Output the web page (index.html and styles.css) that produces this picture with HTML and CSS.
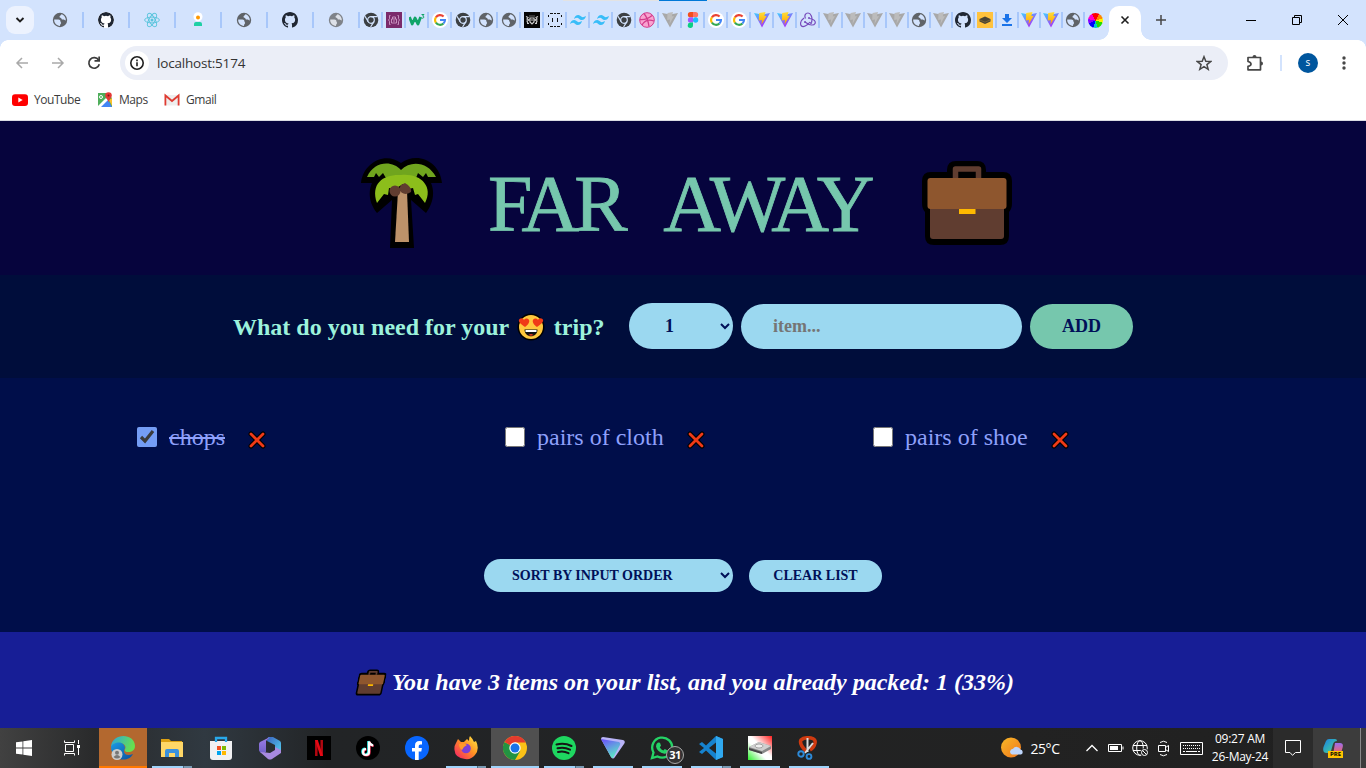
FILE: index.html
```html
<!DOCTYPE html>
<html lang="en">
<head>
<meta charset="utf-8">
<title>Far Away</title>
<link rel="stylesheet" href="styles.css">
</head>
<body>
<svg class="defs" width="0" height="0">
  <defs>
    <linearGradient id="viteA" x1="0" y1="0" x2=".6" y2="1"><stop stop-color="#41d1ff"/><stop offset="1" stop-color="#b02cf5"/></linearGradient>
    <linearGradient id="viteB" x1="0" y1="0" x2="0" y2="1"><stop stop-color="#ffdf3a"/><stop offset="1" stop-color="#ffa000"/></linearGradient>
    <linearGradient id="edge" x1="0" y1="0" x2="1" y2=".3"><stop stop-color="#2aa4e0"/><stop offset="1" stop-color="#66e04f"/></linearGradient>
    <linearGradient id="edge2" x1="0" y1="0" x2="1" y2="1"><stop stop-color="#1a9be6"/><stop offset="1" stop-color="#0b4f9c"/></linearGradient>
    <linearGradient id="fox" x1="1" y1="0" x2="0" y2="1"><stop stop-color="#fff04a"/><stop offset=".45" stop-color="#ff9322"/><stop offset="1" stop-color="#f5156c"/></linearGradient>
    <linearGradient id="m365" x1="0" y1="0" x2="0" y2="1"><stop stop-color="#9d7fe8"/><stop offset="1" stop-color="#7060c8"/></linearGradient>
    <linearGradient id="m365b" x1="0" y1="0" x2="1" y2="1"><stop stop-color="#3a62c0"/><stop offset="1" stop-color="#54d0f0"/></linearGradient>
    <linearGradient id="vpn" x1="0" y1="0" x2=".5" y2="1"><stop stop-color="#6d4aff"/><stop offset="1" stop-color="#5be6c6"/></linearGradient>
    <linearGradient id="sun" x1="0" y1="0" x2="1" y2="1"><stop stop-color="#f9b928"/><stop offset="1" stop-color="#f0761c"/></linearGradient>
    <linearGradient id="cop" x1="0" y1="0" x2="1" y2="1"><stop stop-color="#1b7fe8"/><stop offset=".6" stop-color="#35b8b0"/><stop offset="1" stop-color="#e6cf3b"/></linearGradient>
    <linearGradient id="cop2" x1="0" y1="0" x2="0" y2="1"><stop stop-color="#9b6cf0"/><stop offset="1" stop-color="#f4665d"/></linearGradient>
    <linearGradient id="drive" x1="1" y1="0" x2="0" y2="1"><stop stop-color="#ff1f1f"/><stop offset=".45" stop-color="#fff"/><stop offset=".6" stop-color="#fff"/><stop offset="1" stop-color="#2cf02c"/></linearGradient>
  </defs>
  <symbol id="globe" viewBox="0 0 16 16"><circle cx="8" cy="8" r="7.200" fill="#5f6368"/><path d="M2.200 7.600h4.200c1.300 0 2.100.8 2.100 1.900 0 .8.600.8.600 1.500 0 1-1.100 1-1.100 2.900-3.300 0-6.100-2.700-5.800-6.300zM9.300 2.300c0 1.300-1.800 1.300-1.800 2.500 0 1.300 1.700.7 2 1.900.3 1.100 1.300.9 2.200.9.900 0 1 .9 2.100.9.200-2.900-1.700-5.500-4.500-6.200z" fill="#d3e3fd"/></symbol>
  <symbol id="github" viewBox="0 0 16 16"><path fill="#202733" d="M8 0C3.580 0 0 3.580 0 8c0 3.540 2.290 6.530 5.470 7.590.4.070.55-.17.55-.38v-1.490c-2.010.37-2.530-.49-2.690-.94-.09-.23-.48-.94-.82-1.130-.28-.15-.68-.52-.01-.53.63-.01 1.080.58 1.230.82.72 1.210 1.870.87 2.330.66.07-.52.28-.87.51-1.070-1.780-.2-3.640-.89-3.640-3.950 0-.87.31-1.590.82-2.150-.08-.2-.36-1.020.08-2.120 0 0 .67-.21 2.200.82a7.500 7.500 0 0 1 4 0c1.530-1.040 2.200-.82 2.200-.82.44 1.100.16 1.920.08 2.120.51.56.82 1.270.82 2.150 0 3.070-1.870 3.750-3.650 3.950.29.25.54.73.54 1.480v2.200c0 .21.15.46.55.38A8 8 0 0 0 16 8c0-4.420-3.580-8-8-8z"/></symbol>
  <symbol id="react" viewBox="0 0 16 16"><g fill="none" stroke="#58c4dc" stroke-width=".9"><ellipse cx="8" cy="8" rx="7.400" ry="2.900"/><ellipse cx="8" cy="8" rx="7.400" ry="2.900" transform="rotate(60 8 8)"/><ellipse cx="8" cy="8" rx="7.400" ry="2.900" transform="rotate(120 8 8)"/></g><circle cx="8" cy="8" r="1.500" fill="#58c4dc"/></symbol>
  <symbol id="person" viewBox="0 0 16 16"><circle cx="8" cy="4.800" r="4.500" fill="#fff"/><circle cx="8" cy="5.500" r="2" fill="#ff9800"/><path d="M4 14v-2q0-2 2-2h4q2 0 2 2v2z" fill="#1fd0a5"/></symbol>
  <symbol id="chromeG" viewBox="0 0 16 16"><circle cx="8" cy="8" r="7.300" fill="#3c4043"/><circle cx="8" cy="8" r="3.300" fill="none" stroke="#d3e3fd" stroke-width="1.200"/><path d="M8 4.700h6.500M5.200 9.700L2 4.200M10.900 9.600L7.600 15" stroke="#d3e3fd" stroke-width="1.200"/></symbol>
  <symbol id="purple" viewBox="0 0 16 16"><path d="M0 0h16v16H0z" fill="#7b2a6b"/><g fill="none" stroke="#cf9cc6" stroke-width=".9"><path d="M4.500 3.500h-1v3.200L2.500 8l1 1.300v3.200h1M11.500 3.500h1v3.200l1 1.300-1 1.300v3.200h-1M5.500 7h5v4h-5zM6.500 7V5h3v2M7 9h2"/></g></symbol>
  <symbol id="w3" viewBox="0 0 16 16"><path d="M.5 5l2.700 7L6 6l3 6 2.600-7" fill="none" stroke="#10a468" stroke-width="2.800" stroke-linejoin="round"/><path d="M12.500 2.500H15L13.600 4q1.600.2 1.200 1.500-.7 1.200-2.500.5" fill="none" stroke="#10a468"/></symbol>
  <symbol id="google" viewBox="0 0 16 16"><circle cx="8" cy="8" r="8" fill="#fff"/><g fill="none" stroke-width="2.100"><path d="M3.900 5.400A5 5 0 0 1 11.600 4.500" stroke="#ea4335"/><path d="M3.900 5.300a5 5 0 0 0 0 5.400" stroke="#fbbc05"/><path d="M3.900 10.600a5 5 0 0 0 7.600.9" stroke="#34a853"/><path d="M8 8h5a5 5 0 0 1-1.600 3.600" stroke="#4285f4"/></g></symbol>
  <symbol id="crest" viewBox="0 0 16 16"><path d="M0 0h16v16H0z" fill="#050505"/><path d="M2 4.500l2 1-1 1.500 2 1-2 1 1 2.500M14 4.500l-2 1 1 1.500-2 1 2 1-1 2.500M6 6h4v4l-2 2-2-2zM5.500 4h1m1 0h1m1 0h1M3 11.500h2m6 0h2M7 8h2" fill="none" stroke="#ccc" stroke-width="1.200"/></symbol>
  <symbol id="face" viewBox="0 0 16 16"><path d="M3 1.500h3m1 0h2m1 0h3M3 14.500h3m1 0h2m1 0h3M1.500 3v2m0 6v2m13-10v2m0 6v2M5.500 6v4m5-4v4" fill="none" stroke="#111"/></symbol>
  <symbol id="tail" viewBox="0 0 16 16"><path d="M4 7q1-4 4.300-4 1.500 0 3 1.500T16 4q-1 4-4.300 4-1.500 0-3-1.500T4 7zM0 12q1-4 4.300-4 1.500 0 3 1.500T12 9q-1 4-4.300 4-1.500 0-3-1.500T0 12z" fill="#38bdf8"/></symbol>
  <symbol id="drib" viewBox="0 0 16 16"><circle cx="8" cy="8" r="7.300" fill="#f9a3d0" stroke="#d23c8c"/><path d="M5 1.500q4 5 5 13M1 7.500q7 .5 12-4M3 13q4-7 12-4" fill="none" stroke="#d23c8c" stroke-width="1.300"/></symbol>
  <symbol id="viteG" viewBox="0 0 16 16"><path d="M0 1l8 14.500L16 1 8 2.500z" fill="#a8a8a8"/><path d="M5.500 1l5.500-1-1.200 4.200H12L7.500 12l.5-4.500-2.800.4z" fill="#bcbcbc"/></symbol>
  <symbol id="vite" viewBox="0 0 16 16"><path d="M0 1l8 14.500L16 1 8 2.500z" fill="url(#viteA)"/><path d="M5.200 1l6.300-1-1.200 4H12.500L7.500 12.500l.5-4.500-3.200.5z" fill="url(#viteB)"/></symbol>
  <symbol id="figma" viewBox="0 0 16 16"><path d="M8 0H5.500a2.650 2.650 0 0 0 0 5.300H8z" fill="#f24e1e"/><path d="M8 0h2.500a2.650 2.650 0 0 1 0 5.300H8z" fill="#ff7262"/><path d="M8 5.300H5.500a2.650 2.650 0 0 0 0 5.300H8z" fill="#a259ff"/><circle cx="10.600" cy="8" r="2.650" fill="#1abcfe"/><path d="M8 10.600H5.500A2.650 2.650 0 1 0 8 13.300z" fill="#0acf83"/></symbol>
  <symbol id="redux" viewBox="0 0 16 16"><g fill="none" stroke="#764abc" stroke-width="1.200"><path d="M11.500 10.500C13 5 10.500 1 8 1S4 3.500 5.500 6.500M4 6C0 9 0 12.500 1.500 14S7 14 10 10M5 10c5 4 9 3.500 10 1.500S14 7 9.500 6.500"/></g><circle cx="5" cy="10" r="1" fill="#764abc"/><circle cx="9" cy="6" r="1" fill="#764abc"/><circle cx="11" cy="11" r="1" fill="#764abc"/></symbol>
  <symbol id="layers" viewBox="0 0 16 16"><path d="M0 0h16v16H0z" fill="#ffc23d"/><path d="M2.500 7L8 4.500 13.500 7v2.500L8 12l-5.500-2.500z" fill="#4a4434"/><path d="M3 8l5 2.200L13 8" fill="none" stroke="#8a7038" stroke-width=".7"/></symbol>
  <symbol id="down" viewBox="0 0 16 16"><path d="M6 2h4v4h3l-5 5-5-5h3zM3 12h10v2H3z" fill="#1a73e8"/></symbol>
  <symbol id="bag" viewBox="0 0 90 84"><path d="M25 11V9q0-9 9-9h21q9 0 9 9v2h17q9 0 9 9v22q0 6-3 9v24q0 9-9 9H12q-9 0-9-9V51q-3-3-3-9V20q0-9 9-9z" fill="#000"/><path d="M33.500 17V8h23v9" fill="none" stroke="#603d30" stroke-width="5.500" stroke-linejoin="round"/><path d="M8 45h74v30q0 3-3 3H11q-3 0-3-3z" fill="#603d30"/><rect x="5.500" y="17" width="79" height="31" rx="3" fill="#8e562e"/><rect x="37" y="48" width="16.500" height="5" fill="#ffb900"/></symbol>
  <symbol id="cross" viewBox="0 0 18 18"><path d="M3 3l12 12M15 3L3 15" fill="none" stroke="#000" stroke-width="5" stroke-linecap="round"/><path d="M3 3l12 12M15 3L3 15" fill="none" stroke="#f03a17" stroke-width="2.800" stroke-linecap="round"/></symbol>
</svg>

<header class="browser">
  <div class="tabstrip">
    <span class="drag-line"></span><span class="drag-line active-line"></span>
    <button class="tab-search"><svg width="12" height="12" viewBox="0 0 12 12"><path d="M2.500 4L6 7.500 9.500 4" fill="none" stroke="#1f1f1f" stroke-width="1.900"/></svg></button>
    <div class="tabs wide">
      <i><svg><use href="#globe"/></svg></i><i><svg class="disc"><use href="#github"/></svg></i><i><svg><use href="#react"/></svg></i><i><svg><use href="#person"/></svg></i><i><svg><use href="#globe"/></svg></i><i><svg><use href="#github"/></svg></i><i><svg class="dim"><use href="#globe"/></svg></i>
    </div>
    <div class="tabs mid">
      <i><svg><use href="#chromeG"/></svg></i><i><svg><use href="#purple"/></svg></i><i><svg><use href="#w3"/></svg></i><i><svg><use href="#google"/></svg></i><i><svg><use href="#chromeG"/></svg></i><i><svg><use href="#globe"/></svg></i><i><svg><use href="#globe"/></svg></i><i><svg><use href="#crest"/></svg></i><i><svg><use href="#face"/></svg></i><i><svg><use href="#tail"/></svg></i><i><svg><use href="#tail"/></svg></i><i><svg><use href="#chromeG"/></svg></i><i><svg><use href="#drib"/></svg></i><i><svg><use href="#viteG"/></svg></i><i><svg><use href="#figma"/></svg></i><i><svg><use href="#google"/></svg></i><i><svg><use href="#google"/></svg></i><i><svg><use href="#vite"/></svg></i><i><svg><use href="#vite"/></svg></i><i><svg><use href="#redux"/></svg></i><i><svg><use href="#viteG"/></svg></i>
    </div>
    <div class="tabs slim">
      <i><svg><use href="#viteG"/></svg></i><i><svg><use href="#viteG"/></svg></i><i><svg><use href="#viteG"/></svg></i><i><svg><use href="#globe"/></svg></i><i><svg><use href="#viteG"/></svg></i><i><svg><use href="#github"/></svg></i><i><svg><use href="#layers"/></svg></i><i><svg><use href="#down"/></svg></i><i><svg><use href="#vite"/></svg></i><i><svg><use href="#vite"/></svg></i><i><svg><use href="#globe"/></svg></i><i><b class="wheel"></b></i>
    </div>
    <div class="tab-open"><svg width="10" height="10" viewBox="0 0 10 10"><path d="M1.500 1.500l7 7m0-7l-7 7" stroke="#1f1f1f" stroke-width="1.600"/></svg></div>
    <svg class="plus" viewBox="0 0 10 10"><path d="M5 0v10M0 5h10" stroke="#474747" stroke-width="1.500"/></svg>
    <div class="window-buttons">
      <svg viewBox="0 0 12 12"><path d="M1 6.500h10" stroke="#000"/></svg>
      <svg viewBox="0 0 12 12"><path d="M1.500 3.500h7v7h-7zM3.500 3.500v-2h7v7h-2" fill="none" stroke="#000"/></svg>
      <svg viewBox="0 0 12 12"><path d="M1 1l10 10M11 1L1 11" stroke="#000"/></svg>
    </div>
  </div>
  <div class="toolbar">
    <svg class="nav" viewBox="0 0 16 16"><path d="M14 8H3M8 3L3 8l5 5" fill="none" stroke="#a9a9a9" stroke-width="1.500"/></svg>
    <svg class="nav" viewBox="0 0 16 16"><path d="M2 8h11M8 3l5 5-5 5" fill="none" stroke="#a9a9a9" stroke-width="1.500"/></svg>
    <svg class="nav" viewBox="0 0 16 16"><path d="M12.600 5A5.300 5.300 0 1 0 13.300 9.300" fill="none" stroke="#3c3c3c" stroke-width="1.700"/><path d="M8.500 6.700H14V1.500h-1.700V5H8.500z" fill="#3c3c3c"/></svg>
    <div class="address">
      <span class="info"><svg width="16" height="16" viewBox="0 0 16 16"><circle cx="8" cy="8" r="6.200" fill="none" stroke="#1f1f1f" stroke-width="1.600"/><path d="M8 7.200v4M8 4.500v1.700" stroke="#1f1f1f" stroke-width="1.600"/></svg></span>
      <span class="url">localhost:5174</span>
      <svg class="star" viewBox="0 0 16 16"><path d="M8 1.700l1.800 4.500 4.900.3-3.800 3.100 1.300 4.700L8 11.700l-4.200 2.600 1.300-4.700-3.800-3.100 4.900-.3z" fill="none" stroke="#474747" stroke-width="1.500"/></svg>
    </div>
    <svg class="puzzle" viewBox="0 0 18 18"><path d="M2 3.500h12.500v12.300H2v-3.500q3-.5 3-2.300T2 7.500z" fill="none" stroke="#474747" stroke-width="1.700" stroke-linejoin="round"/><path d="M6.500 3a2 2 0 0 1 4 0zM15 7.500a2 2 0 0 1 0 4z" fill="#474747"/></svg>
    <span class="divider"></span>
    <span class="avatar">s</span>
    <svg class="dots" viewBox="0 0 4 16"><g fill="#474747"><circle cx="2" cy="3" r="1.700"/><circle cx="2" cy="8" r="1.700"/><circle cx="2" cy="13" r="1.700"/></g></svg>
  </div>
  <nav class="bookmarks">
    <a class="bm-yt"><svg width="16" height="16" viewBox="0 0 16 16"><rect y="2.300" width="16" height="11.600" rx="3" fill="#f00"/><path d="M6.300 5.600v5L10.700 8z" fill="#fff"/></svg>YouTube</a>
    <a class="bm-maps"><svg width="16" height="16" viewBox="0 0 16 16"><path d="M1 1h9l5 5v9H1z" fill="#4fae5b"/><path d="M1 14L9 6l3 3-7 6H1z" fill="#fff"/><path d="M8 11l3-3 4 7H4z" fill="#4285f4"/><path d="M12 8l3-2v8z" fill="#fbc02d"/><path d="M8.200 3.600a3.300 3.300 0 0 1 6.600 0c0 2-2.500 3.500-3.200 7-.7-3.500-3.400-5-3.400-7z" fill="#e53935"/><circle cx="11.500" cy="3.500" r="1" fill="#831717"/><circle cx="4" cy="5" r="1.500" fill="none" stroke="#fff"/></svg>Maps</a>
    <a><svg width="16" height="16" viewBox="0 0 16 16"><path d="M1 3h14v10.500H1z" fill="#eee"/><path d="M1.400 13.500V3.500L8 9l6.600-5.500v10" fill="none" stroke="#df3b31" stroke-width="1.800"/></svg>Gmail</a>
  </nav>
</header>

<main class="app">
  <h1 class="logo">
    <svg class="palm" viewBox="0 0 84 92"><path d="M1 26C3 6 25-6 41 6 58-6 80 5 82 26H71c5 12 0 23-5 30L51 43l3 48H30l2-48-15 13C9 46 8 35 12 26z" fill="#000"/><path d="M7 20C14 4 32 3 41 13 51 3 68 5 76 20h-8l-2-4-3 4-5-4-2 5H26l-3-5-4 4-3-4-2 4z" fill="#70a51e"/><path d="M38 34h9l2 51H35z" fill="#bd926a"/><path d="M17 46C10 26 24 17 41 18 60 16 74 29 65 46l-7-9-3 1-2-7-5 1-5-5-8 5-6-1-1 7-4-1z" fill="#8cbe1b"/><path d="M41 28l4-2q7 4 6 9-8 5-12-3z" fill="#603d30"/><circle cx="35" cy="34" r="5.500" fill="#603d30"/></svg>
    <span>Far Away</span>
    <svg class="logo-bag"><use href="#bag"/></svg>
  </h1>
  <form class="add-form">
    <h3>What do you need for your <svg class="love" viewBox="0 0 28 28"><circle cx="14" cy="14" r="13.500" fill="#000"/><circle cx="14" cy="14" r="12" fill="#ffc83d"/><path d="M8 14C2 10 1 8 2.500 6 4.500 4 7 6 7 7c1-2 4-2 5 0s-1 5-4 7zM20 14c6-4 7-6 5.500-8C23.500 4 21 6 21 7c-1-2-4-2-5 0s1 5 4 7z" fill="#f03a17"/><path d="M7.500 16.500h13c0 9-13 9-13 0z" fill="#111"/><path d="M8.500 17h11v2h-11z" fill="#fff"/><path d="M11.500 22q2.500-2 5 0-2.500 1.500-5 0z" fill="#e33b20"/></svg> trip?</h3>
    <select class="pill qty"><option>1</option></select>
    <input class="pill item-input" type="text" placeholder="item...">
    <button class="pill add" type="button">Add</button>
  </form>
  <section class="list">
    <ul>
      <li><input type="checkbox" checked><span class="packed">chops</span><svg class="remove"><use href="#cross"/></svg></li>
      <li><input type="checkbox"><span>pairs of cloth</span><svg class="remove"><use href="#cross"/></svg></li>
      <li><input type="checkbox"><span>pairs of shoe</span><svg class="remove"><use href="#cross"/></svg></li>
    </ul>
    <div class="actions">
      <select class="pill small sort"><option>SORT BY INPUT ORDER</option></select>
      <button class="pill small clear">Clear list</button>
    </div>
  </section>
  <footer class="stats"><svg class="stats-bag"><use href="#bag"/></svg><em>You have 3 items on your list, and you already packed: 1 (33%)</em></footer>
</main>

<div class="taskbar">
  <div class="system">
    <i><svg width="16" height="16" viewBox="0 0 16 16"><path d="M0 2.300L6.500 1.400v6.200H0zM7.300 1.300L16 0v7.600H7.300zM0 8.400h6.500v6.200L0 13.700zM7.300 8.400H16V16l-8.700-1.300z" fill="#fff"/></svg></i>
    <i><svg width="18" height="18" viewBox="0 0 18 18"><path d="M1.500 1.500v2h10v-2M1.500 16.500v-2h10v2M2.500 5.500h8v7h-8zM15.500 1v4m0 4v7" fill="none" stroke="#fff"/><path d="M14 6h3v3h-3z" fill="#fff"/></svg></i>
  </div>
  <div class="apps">
    <i class="edge"><svg viewBox="0 0 24 24"><path d="M0 11C1-4 24-3 24 10c0 4-3 6-7 6-3 0-4-2-3-3C17 7 5 4 0 11z" fill="url(#edge)"/><path d="M0 11c2-5 13-7 14 1-3 5 1 9 8 6-5 10-22 6-22-7z" fill="url(#edge2)"/><circle cx="6" cy="18.500" r="5.500" fill="#ccc"/><circle cx="6" cy="16.800" r="2" fill="#777"/><path d="M2.500 21q3.500-4 7 0-3.500 3-7 0z" fill="#777"/></svg></i>
    <i class="run stacked"><svg viewBox="0 0 24 24"><path d="M1 3h8l2 2h11v16H1z" fill="#dda012"/><path d="M1 6h22v15H1z" fill="#ffd767"/><path d="M5 21v-6q0-2 2-2h10q2 0 2 2v6h-4v-4H9v4z" fill="#3b91dd"/></svg></i>
    <i><svg viewBox="0 0 24 24"><path d="M1 5h22v16q0 3-3 3H4q-3 0-3-3z" fill="#f1f1f3"/><path d="M7 6V2h10v4" fill="none" stroke="#28a8ea" stroke-width="2.300"/><path d="M8 10h4v4H8z" fill="#f25022"/><path d="M13 10h4v4h-4z" fill="#7fba00"/><path d="M8 15h4v4H8z" fill="#00a4ef"/><path d="M13 15h4v4h-4z" fill="#ffb900"/></svg></i>
    <i><svg viewBox="0 0 24 24"><path d="M10 1h5l7 4q1 1 1 2v9l-6-3V9l-8-4z" fill="url(#m365b)"/><path d="M12 1L8 5v11l-3 2-3-2q-1-1-1-2V8q0-1 1-2z" fill="url(#m365)"/><path d="M2 16l6 .5 4 .5 5-3V11l6 3v3l-9 6q-2 1-4 0z" fill="#a88ae0"/></svg></i>
    <i><svg viewBox="0 0 24 24"><path d="M0 0h24v24H0z"/><path d="M9.300 4v16M14.700 4v16" stroke="#b20710" stroke-width="2.500"/><path d="M8 4h2.800l5.200 16h-2.800z" fill="#e50914"/></svg></i>
    <i><svg viewBox="0 0 24 24"><circle cx="12" cy="12" r="12"/><g fill="none" stroke-width="2.200"><path d="M12.300 5v10.500a3 3 0 1 1-3-3M12.300 5q.7 3.500 4.200 4" stroke="#25f4ee"/><path d="M13.500 6v10.500a3 3 0 1 1-3-3M13.500 6q.7 3.500 4.200 4" stroke="#fe2c55"/><path d="M13 5.500V16a3 3 0 1 1-3-3M13 5.500q.7 3.500 4.200 4" stroke="#fff"/></g></svg></i>
    <i><svg viewBox="0 0 24 24"><circle cx="12" cy="12" r="12" fill="#0866ff"/><path d="M10 24v-8.500H7V12h3V9.500Q10 5 14.500 5l2.500.3v3.200h-1.700Q13.700 8.500 13.700 10v2h3.200l-.6 3.500h-2.600V24z" fill="#fff"/></svg></i>
    <i class="run stacked"><svg viewBox="0 0 24 24"><path d="M2 7l2-4 3 3h3q2-2 3-3l2 2q0-4 1-5 3 3 4 6l2-1q4 8-1 14-4 5-10 4Q1 22 .500 14 0 10 2 7z" fill="url(#fox)"/><circle cx="12" cy="12.500" r="4.800" fill="#7b3fd6"/><path d="M5 8q5-2 8 1l-3 2-2 3q-3-2-3-6z" fill="#ff9a2a"/></svg></i>
    <i class="run current"><svg viewBox="0 0 24 24"><circle cx="12" cy="12" r="12" fill="#fbc116"/><path d="M1.600 6A12 12 0 0 0 12 24l5.200-9L12 12z" fill="#229342"/><path d="M1.600 6L12 12V6.500h10.700A12 12 0 0 0 1.600 6z" fill="#e33b2e"/><circle cx="12" cy="12" r="5.700" fill="#fff"/><circle cx="12" cy="12" r="4.500" fill="#1a73e8"/></svg></i>
    <i class="run stacked"><svg viewBox="0 0 24 24"><circle cx="12" cy="12" r="12" fill="#1ed760"/><path d="M4.500 8.500q8-2 15 1.500M5.500 12.300q6.500-1.800 12.500 1.400M6 16q5.500-1.500 10.500 1.200" fill="none" stroke="#151515" stroke-width="2" stroke-linecap="round"/></svg></i>
    <i class="run"><svg viewBox="0 0 24 24"><path d="M0 3Q0 1 2 1l20 3q3 1 1 4l-9 13q-2 3-4 0z" fill="#b9b4f8"/><path d="M0 3l18 3q2 1 1 3l-7 13q-1 0-2-1z" fill="url(#vpn)"/></svg></i>
    <i class="run whatsapp"><svg viewBox="0 0 24 24"><path d="M2 22l1.500-5.500a10 10 0 1 1 4 3.900z" fill="none" stroke="#25d366" stroke-width="2.300"/><path d="M8 6.500l2 .3 1 3-1.200 1.500q1 2.300 3.500 3.300l1.500-1.500 3 1.500q0 3-3.300 3.200Q7 16 6 10.500q0-3 2-4z" fill="#25d366"/></svg><b class="count">31</b></i>
    <i class="run stacked"><svg viewBox="0 0 24 24"><path d="M17 0l7 3v18l-7 3L7 14.500 3 18l-3-2 5-4-5-4 3-2 4 3.500z" fill="#1683cf"/><path d="M17 6.500v11L10 12z" fill="#232323"/><path d="M17 0l7 3v18l-7 3z" fill="#30a9f0"/></svg></i>
    <i class="run"><svg viewBox="0 0 24 24"><path d="M0 0h24v24H0z" fill="url(#drive)"/><path d="M1 11l10-5 12 4v3l-9 5-13-4z" fill="#888"/><path d="M1 11l10-5 12 4-9 5z" fill="#d0d0d0"/><ellipse cx="11" cy="10" rx="4" ry="2" fill="#eee" stroke="#777" stroke-width=".6"/><path d="M1 12l13 4v2L1 14z" fill="#444"/></svg></i>
    <i class="run"><svg viewBox="0 0 24 24"><path d="M9 15Q2 8 4 4 7 1 14 2q5 1 4 5-1 5-5 7" fill="none" stroke="#cf3a10" stroke-width="3.600"/><path d="M10.500 2v14M16 7L8 17" stroke="#ddd" stroke-width="2"/><circle cx="4" cy="18" r="2.700" fill="none" stroke="#2d8ad8" stroke-width="1.900"/><circle cx="12" cy="20.500" r="2.400" fill="none" stroke="#2d8ad8" stroke-width="1.900"/></svg></i>
  </div>
  <div class="tray">
    <svg width="24" height="22" viewBox="0 0 24 22"><circle cx="11" cy="10.500" r="10" fill="url(#sun)"/><path d="M12 17.500a3 3 0 0 1 1-5.800 4.300 4.300 0 0 1 7.500.8 2.600 2.600 0 0 1 .5 5z" fill="#bed5fb"/></svg>
    <span class="temp">25°C</span>
    <span></span>
    <svg width="14" height="10" viewBox="0 0 14 10"><path d="M1.500 8L7 2.500 12.500 8" fill="none" stroke="#fff" stroke-width="1.300"/></svg>
    <svg width="16" height="10" viewBox="0 0 16 10"><path d="M.5 1.500h13v7H.5zM15 3.500v3" fill="none" stroke="#fff"/><path d="M2 3h8v4H2z" fill="#fff"/></svg>
    <svg width="17" height="17" viewBox="0 0 17 17"><g fill="none" stroke="#fff"><circle cx="8" cy="8" r="7.300"/><ellipse cx="8" cy="8" rx="3.300" ry="7.300"/><path d="M1 5.500h14M1 10.500h14"/></g><circle cx="12.500" cy="12.500" r="4.300" fill="#222"/><circle cx="12.500" cy="12.500" r="3" fill="none" stroke="#fff"/><path d="M10.500 10.500l4 4" stroke="#fff"/></svg>
    <svg width="12" height="17" viewBox="0 0 12 17"><path d="M.5 5.500h7v6h-7zM7.500 7.500l3-2v6l-3-2M2 2.500q3.500-2.500 7 0M2 14.500q3.500 2.500 7 0" fill="none" stroke="#fff"/></svg>
    <svg width="23" height="13" viewBox="0 0 23 13"><path d="M.5.500h22v12H.5z" fill="none" stroke="#fff"/><path d="M3 3.500h17M3 6.500h17" stroke="#fff" stroke-dasharray="1 1"/><path d="M3 9.500h2m1 0h11m1 0h2" stroke="#fff"/></svg>
    <div class="clock">09:27 AM<br>26-May-24</div>
    <span class="notify"><svg width="18" height="18" viewBox="0 0 18 18"><path d="M1.500 1.500h15v12h-5L8.500 16.300 6 13.500H1.500z" fill="none" stroke="#fff"/></svg></span>
    <span class="copilot"><svg width="20" height="20" viewBox="0 0 20 20"><path d="M6 1h6q2 0 2 2-3 0-4 3l-2 7q-1 2-4 2Q-1 15 .500 9L3 3q1-2 3-2z" fill="url(#cop)"/><path d="M12 5h5q4 0 2.500 5L18 15H9q2-1 2-4z" fill="url(#cop2)"/></svg><b>PRE</b></span>
    <span class="peek"></span>
  </div>
</div>
</body>
</html>
```
FILE: styles.css
```css
* { box-sizing: border-box; margin: 0; padding: 0; }
body { width: 1366px; height: 768px; overflow: hidden; display: flex; flex-direction: column; font-family: "Open Sans", sans-serif; background: #d3e3fd; }
svg { display: block; flex: none; }
i { font-style: normal; }
.defs { position: absolute; }

/* Browser chrome */
.browser { height: 121px; flex: none; background: #fff; border-bottom: 1px solid #dadce4; }
.tabstrip { position: relative; height: 40px; display: flex; align-items: center; padding-left: 6px; background: #d3e3fd; }
.drag-line { position: absolute; top: 0; left: 563px; width: 240px; height: 1px; background: #e3e3e3; }
.active-line { left: 659px; width: 48px; background: #0078d7; }
.tab-search { width: 28px; height: 28px; margin-right: 4px; display: grid; place-items: center; border: 0; border-radius: 9px; background: #ecf2fe; }
.tabs { display: flex; }
.tabs i { height: 16px; display: flex; align-items: center; justify-content: center; border-right: 2px solid #a8c7fa; }
.tabs svg { width: 16px; height: 16px; }
.tabs .disc { background: #fff; border-radius: 50%; }
.tabs .dim { filter: grayscale(1); opacity: .75; }
.wide i { width: 46px; }
.mid i { width: 23px; }
.slim i { width: 22px; }
.slim i:last-child { border-color: transparent; }
.wheel { width: 15px; height: 15px; border-radius: 50%; background: conic-gradient(#f00 0 8%, #f80 0 20%, #fe0 0 30%, #2d0 0 45%, #0cc 0 55%, #00f 0 68%, #80f 0 78%, #f0c 0 92%, #f00 0); }
.tab-open { align-self: flex-end; position: relative; width: 32px; height: 34px; margin-left: 2px; display: grid; place-items: center; padding-bottom: 6px; background: #fff; border-radius: 10px 10px 0 0; }
.tab-open::before, .tab-open::after { content: ""; position: absolute; bottom: 0; width: 10px; height: 10px; }
.tab-open::before { right: 100%; background: radial-gradient(circle at 0 0, transparent 9.500px, #fff 10px); }
.tab-open::after { left: 100%; background: radial-gradient(circle at 100% 0, transparent 9.500px, #fff 10px); }
.plus { width: 10px; height: 10px; margin-left: 15px; }
.window-buttons { margin-left: auto; padding-right: 17px; display: flex; gap: 34px; }
.window-buttons svg { width: 12px; height: 12px; }
.toolbar { height: 46px; display: flex; align-items: center; padding-left: 14px; background: radial-gradient(circle at 8px 8px, #fff 7.500px, #d3e3fd 8px) 0 0 / 8px 8px no-repeat, radial-gradient(circle at 0 8px, #fff 7.500px, #d3e3fd 8px) 100% 0 / 8px 8px no-repeat; }
.nav { width: 16px; height: 16px; margin-right: 20px; }
.nav:nth-child(3) { margin-right: 18px; }
.address { width: 1108px; height: 34px; display: flex; align-items: center; padding: 0 16px 0 5px; border-radius: 17px; background: #ebeef7; }
.info { width: 24px; height: 24px; display: grid; place-items: center; background: #fff; border-radius: 50%; }
.url { margin-left: 8px; font-size: 13.500px; color: #333; letter-spacing: -.2px; }
.star { width: 16px; height: 16px; margin-left: auto; }
.puzzle { width: 18px; height: 18px; margin-left: 18px; }
.divider { width: 2px; height: 16px; margin-left: 16px; background: #d3e3fd; }
.avatar { width: 20px; height: 20px; margin-left: 16px; border-radius: 50%; background: #00569e; color: #fff; font-size: 10px; line-height: 19px; text-align: center; }
.dots { width: 4px; height: 16px; margin-left: 24px; }
.bookmarks { display: flex; padding: 6px 12px; font-size: 12px; line-height: 16px; color: #3c3c3c; }
.bookmarks a { display: flex; gap: 6px; letter-spacing: -.45px; }
.bm-yt { width: 85px; }
.bm-maps { width: 67px; }

/* Page */
.app { height: 607px; flex: none; font-family: "Liberation Serif", serif; }
.logo { height: 154px; display: flex; align-items: flex-start; background: #06043d; color: #76c7ad; font-weight: 500; font-size: 80px; line-height: 92px; letter-spacing: -5px; word-spacing: 30px; text-transform: uppercase; }
.logo span { width: 392px; margin: 37px 42px 0 44px; white-space: nowrap; -webkit-text-stroke: .8px #76c7ad; }
.palm { width: 84px; height: 92px; margin: 36px 0 0 360px; }
.logo-bag { width: 90px; height: 84px; margin-top: 40px; }
.add-form { height: 103px; display: flex; align-items: center; padding-left: 233px; gap: 8px; background: #000d3b; }
.add-form h3 { width: 388px; display: flex; padding-top: 1px; white-space: pre; font-size: 24px; line-height: 28px; color: #9cf2dc; }
.love { width: 28px; height: 28px; margin: 0 3px 0 2px; }
.pill { height: 45px; border: 0; border-radius: 23px; background: #9bd8f0; color: #001058; font-family: inherit; font-size: 18px; font-weight: 700; }
.qty { width: 104px; height: 46px; margin-bottom: 2px; padding: 0 32px; }
.item-input { width: 281px; padding: 0 32px; }
.item-input::placeholder { color: #757575; }
.add { width: 103px; background: #76c7ad; text-transform: uppercase; }
.list { height: 254px; display: flex; flex-direction: column; justify-content: space-between; padding: 42px 0 40px; background: #000e4a; }
.list ul { display: grid; grid-template-columns: repeat(3, 368px); padding-left: 137px; list-style: none; }
.list li { display: flex; align-items: center; height: 34px; font-size: 24px; color: #8ea0fb; }
.list li input { width: 20px; height: 20px; margin-right: 12px; accent-color: #749df5; }
.packed { text-decoration: line-through; }
.remove { width: 18px; height: 18px; margin: 5px 0 0 23px; }
.actions { display: flex; justify-content: center; gap: 16px; }
.small { height: 32px; font-size: 14px; text-transform: uppercase; }
.sort { width: 249px; height: 33px; padding: 0 24px; }
.clear { width: 133px; margin-top: 1px; }
.stats { height: 96px; display: flex; align-items: center; padding: 5px 0 0 357px; gap: 7px; background: #171e96; color: #fff; font-size: 24px; font-weight: 700; }
.stats-bag { width: 28px; height: 27px; transform: skewX(-12deg); }
.stats em { white-space: nowrap; }

/* Taskbar */
.taskbar { height: 40px; flex: none; display: flex; background: linear-gradient(90deg, #414141, #292a2b 7%, #303941 15%, #222426 24%, #222 75%, #202020); color: #fff; }
.system { width: 99px; display: flex; }
.system i { width: 48px; display: grid; place-items: center; }
.apps { display: flex; gap: 1px; }
.apps i { position: relative; width: 48px; display: grid; place-items: center; }
.apps svg { width: 24px; height: 24px; }
.edge { background: #b3682f; border-bottom: 2px solid #ff7800; padding-top: 2px; }
.run::after { content: ""; position: absolute; left: 4px; right: 4px; bottom: 0; height: 2px; background: #9fd3fa; }
.stacked::after { background: linear-gradient(90deg, #9fd3fa 31px, #526d80 31px 32px, #7899b2 32px); }
.current { background: #505050; }
.run.current::after { left: 0; right: 0; }
.count { position: absolute; left: 28px; top: 18px; width: 18px; height: 18px; border: 1px solid #aaa; border-radius: 50%; background: #333; font-size: 11px; line-height: 15px; text-align: center; letter-spacing: -.5px; }
.tray { margin-left: auto; display: grid; grid-template-columns: 24px 42px 14px 24px 24px 24px 24px 31px 66px 40px 47px 6px; place-items: center; font-size: 12px; }
.temp { font-size: 14px; letter-spacing: -.4px; }
.clock { font-size: 12px; line-height: 18px; text-align: center; letter-spacing: -.25px; white-space: nowrap; }
.notify, .copilot { width: 100%; height: 40px; display: grid; place-items: center; background: #2b2b2b; }
.copilot { position: relative; background: #3c3c3c; padding-right: 8px; }
.copilot b { position: absolute; left: 15px; top: 23px; width: 15px; background: #ffc400; color: #000; font-size: 6px; line-height: 7px; text-align: center; }
.peek { width: 100%; height: 40px; border-left: 1px solid #888; background: #3c3c3c; }
```
